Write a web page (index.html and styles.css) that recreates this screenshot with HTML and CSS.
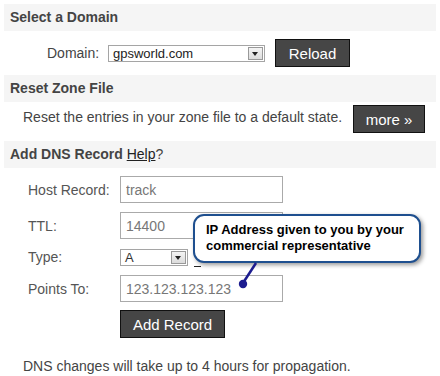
FILE: index.html
```html
<!DOCTYPE html>
<html lang="en">
<head>
    <meta charset="UTF-8">
    <title>DNS Manager</title>
    <link rel="stylesheet" href="styles.css">
</head>
<body>
    <div class="page">
        <h2 class="section-title">Select a Domain</h2>
        <div class="domain-row">
            <label for="domain">Domain:</label>
            <div class="select select-domain">
                <span>gpsworld.com</span>
                <span class="select-arrow"></span>
            </div>
            <button class="btn btn-reload">Reload</button>
        </div>

        <h2 class="section-title">Reset Zone File</h2>
        <div class="reset-row">
            <span class="reset-text">Reset the entries in your zone file to a default state.</span>
            <button class="btn btn-more">more &raquo;</button>
        </div>

        <h2 class="section-title">Add DNS Record <a href="#" class="help">Help</a><span class="normal">?</span></h2>
        <div class="record-form">
            <label>Host Record:</label>
            <div class="field"><input type="text" value="track"></div>
            <label>TTL:</label>
            <div class="field"><input type="text" value="14400"></div>
            <label>Type:</label>
            <div class="field field-type">
                <div class="select select-type">
                    <span>A</span>
                    <span class="select-arrow"></span>
                </div>
                <span class="type-link"></span>
            </div>
            <label>Points To:</label>
            <div class="field"><input type="text" value="123.123.123.123"></div>
            <span></span>
            <div class="field"><button class="btn btn-add">Add Record</button></div>
        </div>

        <p class="note">DNS changes will take up to 4 hours for propagation.</p>

        <div class="callout">IP Address given to you by your commercial representative</div>
        <svg class="pointer" width="30" height="32" viewBox="0 0 30 32">
            <line x1="22" y1="1" x2="9" y2="21" stroke="#1c1c8f" stroke-width="2.5"/>
            <circle cx="9" cy="22" r="4.2" fill="#1c1c8f"/>
        </svg>
    </div>
</body>
</html>
```

FILE: styles.css
```css
body {
    margin: 4px;
    font-family: 'Liberation Sans', Arial, sans-serif;
    font-size: 14px;
    color: #444;
    background: #fff;
}
.page {
    position: relative;
}
.section-title {
    margin: 0;
    height: 27px;
    line-height: 27px;
    padding: 0 6px;
    background: #f5f5f5;
    font-size: 14px;
    font-weight: bold;
    color: #444;
}
.section-title .help {
    font-weight: normal;
    color: #222;
    text-decoration: underline;
}
.section-title .normal {
    font-weight: normal;
}
.domain-row {
    display: flex;
    align-items: center;
    height: 28px;
    margin: 8px 0;
    padding-left: 43px;
}
.domain-row label {
    width: 61px;
}
.select {
    display: flex;
    align-items: center;
    justify-content: space-between;
    box-sizing: border-box;
    height: 17px;
    border: 1px solid #a5a5a5;
    background: #fff;
    font-size: 13px;
    color: #222;
    padding-left: 4px;
}
.select-domain {
    width: 157px;
}
.select-arrow {
    position: relative;
    width: 15px;
    height: 13px;
    margin-right: 1px;
    border: 1px solid #999;
    box-sizing: border-box;
    background: linear-gradient(#f4f4f4, #dcdcdc);
}
.select-arrow::after {
    content: "";
    position: absolute;
    left: 3px;
    top: 4px;
    border-left: 3.5px solid transparent;
    border-right: 3.5px solid transparent;
    border-top: 4px solid #222;
}
.btn {
    box-sizing: border-box;
    height: 28px;
    background: #464646;
    border: 1px solid #111;
    color: #fff;
    font-family: 'Liberation Sans', Arial, sans-serif;
    font-size: 15px;
    padding: 0;
    cursor: pointer;
}
.btn-reload {
    width: 75px;
    margin-left: 10px;
}
.reset-row {
    display: flex;
    align-items: center;
    margin: 3px 0 8px;
    padding-left: 19px;
}
.reset-text {
    margin-top: -4px;
}
.btn-more {
    width: 72px;
    margin-left: 11px;
}
.record-form {
    display: grid;
    grid-template-columns: 92px 163px;
    row-gap: 9px;
    align-items: center;
    margin-top: 8px;
    padding-left: 24px;
}
.record-form label {
    font-size: 14px;
    color: #555;
}
.field input {
    box-sizing: border-box;
    width: 163px;
    height: 27px;
    border: 1px solid #aaa;
    padding: 0 5px;
    font-family: 'Liberation Sans', Arial, sans-serif;
    font-size: 14px;
    color: #777;
    display: block;
}
.field-type {
    display: flex;
    align-items: flex-end;
    height: 18px;
}
.select-type {
    width: 68px;
    color: #333;
}
.type-link {
    width: 7px;
    height: 1px;
    margin: 0 0 -1px 6px;
    background: #222;
}
.btn-add {
    width: 105px;
    margin-top: -1px;
}
.note {
    margin: 20px 0 0 19px;
}
.callout {
    position: absolute;
    left: 189px;
    top: 210px;
    box-sizing: border-box;
    width: 228px;
    height: 49px;
    padding: 6px 10px 0 11px;
    border: 2px solid #1e4f8f;
    border-radius: 11px;
    background: #fff;
    box-shadow: 2px 2px 4px rgba(0, 0, 0, 0.4);
    font-size: 13px;
    line-height: 16px;
    font-weight: bold;
    color: #000;
}
.pointer {
    position: absolute;
    left: 230px;
    top: 258px;
}
```
